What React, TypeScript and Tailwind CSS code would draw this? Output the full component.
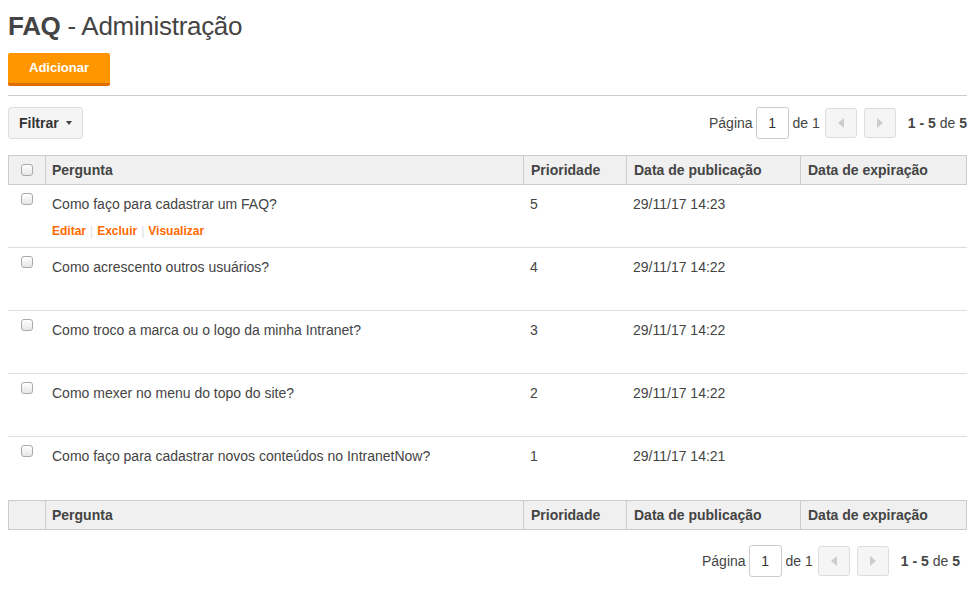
import { useState } from 'react'

const rows = [
  { q: 'Como faço para cadastrar um FAQ?', p: 5, d: '29/11/17 14:23', actions: true },
  { q: 'Como acrescento outros usuários?', p: 4, d: '29/11/17 14:22' },
  { q: 'Como troco a marca ou o logo da minha Intranet?', p: 3, d: '29/11/17 14:22' },
  { q: 'Como mexer no menu do topo do site?', p: 2, d: '29/11/17 14:22' },
  { q: 'Como faço para cadastrar novos conteúdos no IntranetNow?', p: 1, d: '29/11/17 14:21' },
]

function Check() {
  return <span className="block h-[12px] w-[12px] rounded-[3px] border border-[#aaa] bg-gradient-to-b from-[#fff] to-[#e6e6e6]" />
}

function Arrow({ dir }: { dir: 'l' | 'r' }) {
  return (
    <svg width="6" height="10" viewBox="0 0 6 10">
      {dir === 'l' ? <path d="M6 0 L0 5 L6 10 Z" fill="#ccc" /> : <path d="M0 0 L6 5 L0 10 Z" fill="#ccc" />}
    </svg>
  )
}

function Pager() {
  return (
    <div className="flex items-center text-[14px] text-[#444]">
      <span>Página</span>
      <span className="ml-[3px] flex h-[32px] w-[33px] items-center justify-center rounded-[3px] border border-[#ccc] bg-white text-[#333]">1</span>
      <span className="ml-[4px]">de 1</span>
      <span className="ml-[5px] flex h-[30px] w-[32px] items-center justify-center rounded-[3px] border border-[#ddd] bg-[#f5f5f5]"><Arrow dir="l" /></span>
      <span className="ml-[7px] flex h-[30px] w-[32px] items-center justify-center rounded-[3px] border border-[#ddd] bg-[#f5f5f5]"><Arrow dir="r" /></span>
      <span className="ml-[12px]"><b>1 - 5</b> de <b>5</b></span>
    </div>
  )
}

function HeadRow({ check }: { check?: boolean }) {
  return (
    <div className="flex h-[30px] border border-[#ccc] bg-[#f0f0f0] text-[14px] font-bold text-[#444]">
      <div className="flex w-[37px] items-center justify-center border-r border-[#ccc]">{check && <Check />}</div>
      <div className="w-[478px] border-r border-[#ccc] pl-[6px] pt-[4px]">Pergunta</div>
      <div className="w-[103px] border-r border-[#ccc] pl-[7px] pt-[4px]">Prioridade</div>
      <div className="w-[174px] border-r border-[#ccc] pl-[7px] pt-[4px]">Data de publicação</div>
      <div className="flex-1 pl-[7px] pt-[4px]">Data de expiração</div>
    </div>
  )
}

export default function App() {
  const [list] = useState(rows)
  return (
    <div className="min-h-screen bg-white px-[8px] pt-[9px] font-['Liberation_Sans',Arial,sans-serif] text-[#444]">
      <h1 className="text-[26px] leading-[34px] tracking-[-0.3px] text-[#444]"><b>FAQ</b> - Administração</h1>
      <button className="mt-[10px] h-[33px] w-[102px] rounded-[2px] border-b-[3px] border-[#e06d00] bg-[#ff9600] text-[13px] font-bold text-white">Adicionar</button>
      <div className="mt-[9px] border-t border-[#ccc]" />
      <div className="mt-[11px] flex items-center justify-between">
        <button className="flex h-[32px] items-center rounded-[3px] border border-[#ddd] bg-[#f5f5f5] px-[10px] text-[14px] font-bold text-[#333]">
          Filtrar
          <svg className="ml-[7px]" width="6" height="4" viewBox="0 0 6 4"><path d="M0 0 L6 0 L3 4 Z" fill="#444" /></svg>
        </button>
        <Pager />
      </div>
      <div className="mt-[16px]">
        <HeadRow check />
        {list.map((r, i) => (
          <div key={i} className={`flex h-[63px] text-[14px] text-[#444] ${i < list.length - 1 ? 'border-b border-[#ddd]' : ''}`}>
            <div className="flex w-[37px] justify-center pt-[8px] pl-[1px]"><Check /></div>
            <div className="w-[478px] pl-[7px] pt-[9px]">
              <div>{r.q}</div>
              {r.actions && (
                <div className="mt-[7px] flex items-center text-[12px] font-bold text-[#ff6a00]">
                  <span>Editar</span>
                  <span className="mx-[4px] font-normal text-[#ddd]">|</span>
                  <span>Excluir</span>
                  <span className="mx-[4px] font-normal text-[#ddd]">|</span>
                  <span>Visualizar</span>
                </div>
              )}
            </div>
            <div className="w-[103px] pl-[7px] pt-[9px]">{r.p}</div>
            <div className="w-[174px] pl-[7px] pt-[9px]">{r.d}</div>
            <div className="flex-1" />
          </div>
        ))}
        <HeadRow />
      </div>
      <div className="mt-[15px] flex justify-end pr-[7px]">
        <Pager />
      </div>
    </div>
  )
}
